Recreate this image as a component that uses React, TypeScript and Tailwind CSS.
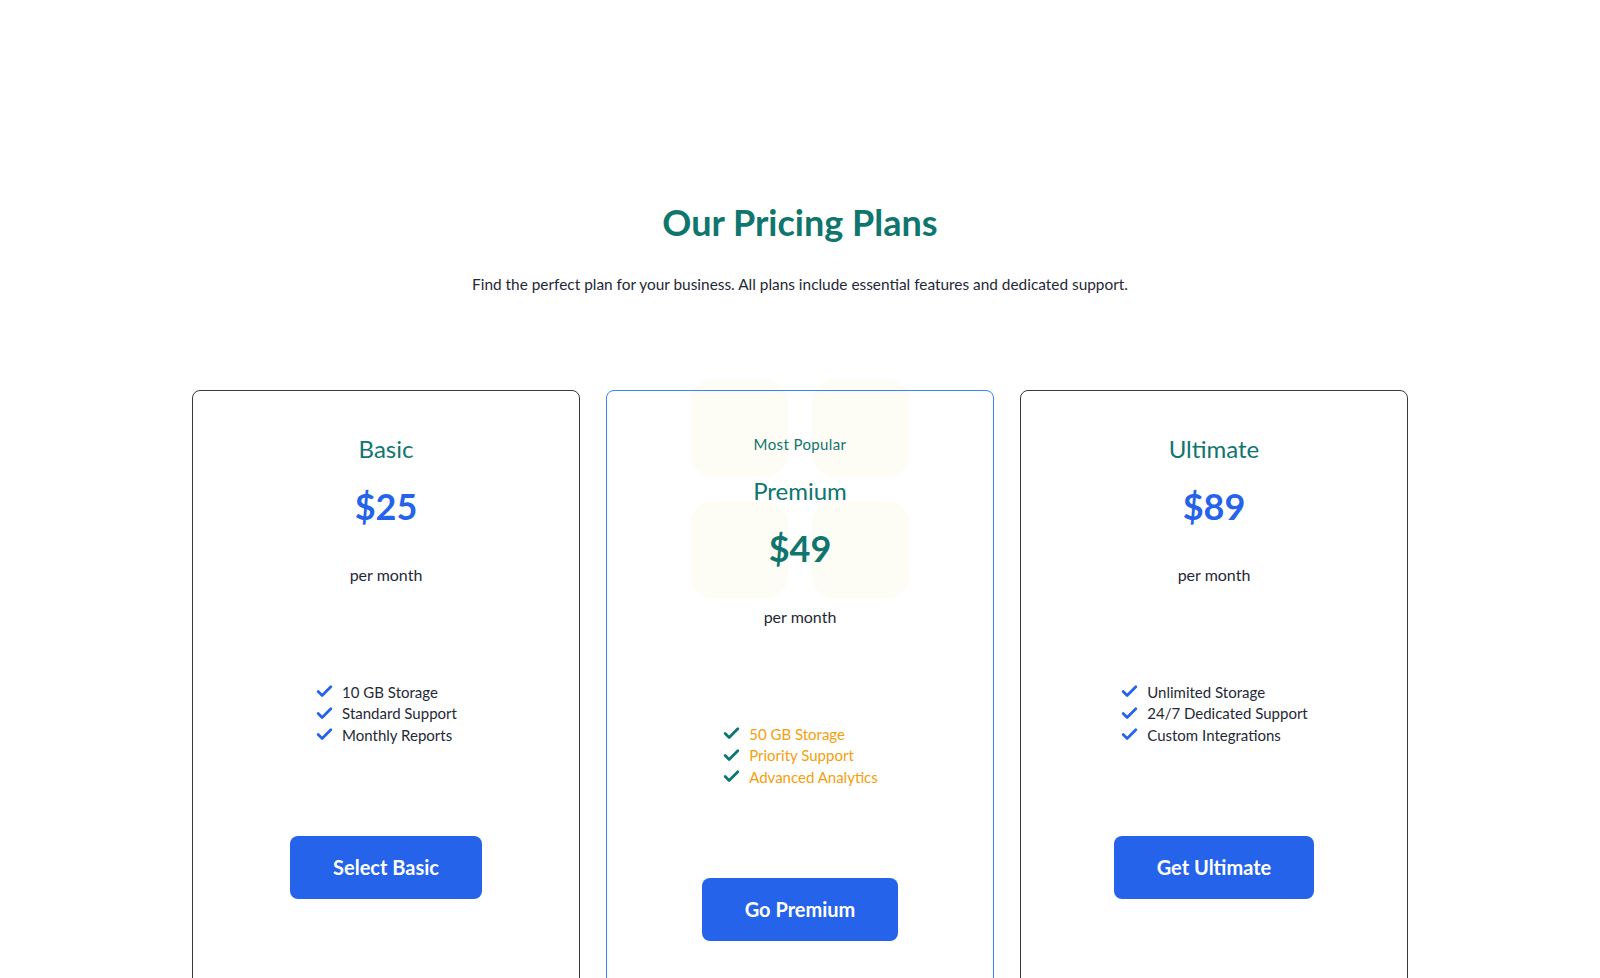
import { Check } from 'lucide-react'

type Plan = {
  name: string
  price: string
  features: string[]
  cta: string
  popular?: boolean
}

const plans: Plan[] = [
  { name: 'Basic', price: '$25', features: ['10 GB Storage', 'Standard Support', 'Monthly Reports'], cta: 'Select Basic' },
  { name: 'Premium', price: '$49', features: ['50 GB Storage', 'Priority Support', 'Advanced Analytics'], cta: 'Go Premium', popular: true },
  { name: 'Ultimate', price: '$89', features: ['Unlimited Storage', '24/7 Dedicated Support', 'Custom Integrations'], cta: 'Get Ultimate' },
]

function PlanCard({ plan }: { plan: Plan }) {
  return (
    <div
      className={`relative rounded-lg border h-[620px] flex flex-col items-center pt-[42px] ${
        plan.popular ? 'border-[#3b82f6]' : 'border-[#3a3a3a]'
      }`}
    >
      {plan.popular && (
        <>
          {/* faint decorative squares, behind the card border */}
          <div className="absolute left-1/2 -translate-x-1/2 -top-[12px] w-[220px] grid grid-cols-[98px_98px] gap-[24px] -z-10 pointer-events-none">
            <div className="h-[98px] rounded-[24px] bg-[#fdfcf5]" />
            <div className="h-[98px] rounded-[24px] bg-[#fdfcf5]" />
            <div className="h-[98px] rounded-[24px] bg-[#fdfcf5]" />
            <div className="h-[98px] rounded-[24px] bg-[#fdfcf5]" />
          </div>
          <p className="text-[15px] leading-[22px] tracking-wide text-[#0f766e] mb-[20px]">Most Popular</p>
        </>
      )}
      <h3 className="text-[24px] leading-[32px] text-[#0f766e]">{plan.name}</h3>
      <p
        className={`mt-[21px] text-[36px] leading-[40px] font-bold ${
          plan.popular ? 'text-[#0f766e]' : 'text-[#2563eb]'
        }`}
      >
        {plan.price}
      </p>
      <p className="mt-[37px] text-[16px] leading-[24px] text-[#1f2937]">per month</p>

      <ul className="mt-[94px] flex flex-col">
        {plan.features.map((f) => (
          <li key={f} className="flex items-center gap-[8px] h-[21.5px] text-[15px]">
            <Check
              className={`w-[19px] h-[19px] ${plan.popular ? 'text-[#0f766e]' : 'text-[#2563eb]'}`}
              strokeWidth={3.5}
            />
            <span className={plan.popular ? 'text-[#f59e0b]' : 'text-[#1f2937]'}>{f}</span>
          </li>
        ))}
      </ul>

      <button className="mt-[90px] h-[63px] px-[43px] rounded-lg bg-[#2563eb] text-white text-[20px] font-bold">
        {plan.cta}
      </button>
    </div>
  )
}

export default function App() {
  return (
    <div className="min-h-screen overflow-hidden" style={{ fontFamily: 'Lato, "Noto Sans", sans-serif' }}>
      <div className="max-w-[1216px] mx-auto pt-[202px]">
        <h1 className="text-center text-[36px] leading-[40px] font-bold text-[#0f766e]">Our Pricing Plans</h1>
        <p className="mt-[30px] text-center text-[15.4px] leading-[24px] text-[#1f2937]">
          Find the perfect plan for your business. All plans include essential features and dedicated support.
        </p>

        <div className="mt-[94px] grid grid-cols-3 gap-[26px]">
          {plans.map((p) => (
            <PlanCard key={p.name} plan={p} />
          ))}
        </div>
      </div>
    </div>
  )
}
